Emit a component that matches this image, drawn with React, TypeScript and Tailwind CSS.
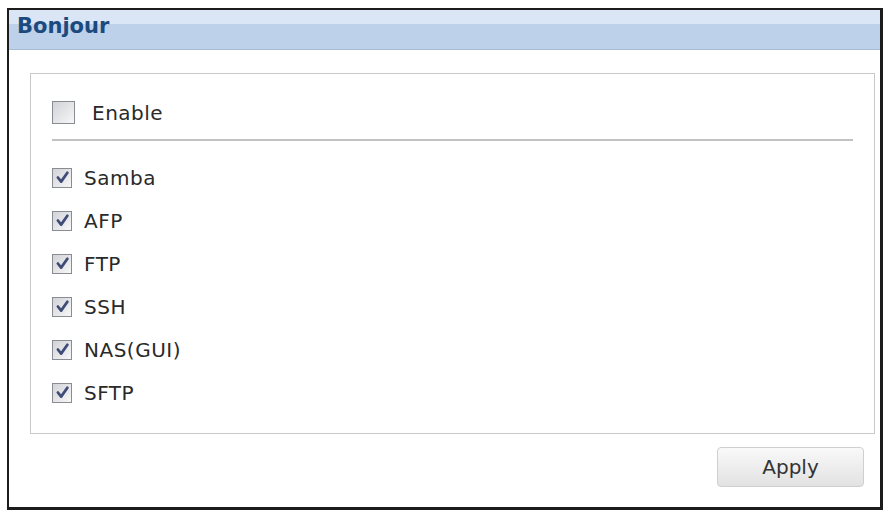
import React, { useState } from "react";

const services = ["Samba", "AFP", "FTP", "SSH", "NAS(GUI)", "SFTP"];

function Box({ checked, size }: { checked: boolean; size: number }) {
  return (
    <span
      className="flex shrink-0 items-center justify-center border border-[#8a8c94] bg-gradient-to-br from-[#d2d3d8] to-[#f7f7f7]"
      style={{ width: size, height: size }}
    >
      {checked && (
        <svg width={size - 5} height={size - 5} viewBox="0 0 12 12">
          <path d="M2.3 6 L4.9 9.3 L9.9 2.2" fill="none" stroke="#3f4c78" strokeWidth="2.2" strokeLinecap="round" strokeLinejoin="round" />
        </svg>
      )}
    </span>
  );
}

export default function App() {
  const [enabled, setEnabled] = useState(false);
  const [checked, setChecked] = useState<string[]>(services);

  return (
    <div className="w-[887px] h-[515px] bg-white pt-[8px] pl-[7px] font-['DejaVu_Sans',sans-serif]">
      <div className="flex h-[502px] w-[876px] flex-col border-[#1c1c1c] border-t-2 border-l-2 border-r-[3px] border-b-[3px] bg-white">
        <div className="h-[40px] border-b border-[#a9bcd6] bg-[linear-gradient(#dae6f6_0px,#dae6f6_14px,#bed1eb_14px,#bed1eb_100%)] pl-[8px]">
          <span className="block text-[21px] font-bold leading-[33px] text-[#1d4a7d]">Bonjour</span>
        </div>

        <div className="ml-[21px] mr-[5px] mt-[23px] h-[361px] border border-[#c9c9c9] px-[21px] pt-[27px]">
          <label className="flex h-[23px] cursor-pointer items-center" onClick={() => setEnabled(!enabled)}>
            <Box checked={enabled} size={23} />
            <span className="ml-[17px] text-[20px] tracking-[0.5px] text-[#2a2a2a]">Enable</span>
          </label>
          <div className="mt-[15px] h-[2px] bg-[#c2c2c2]" />
          <div className="mt-[15px] flex flex-col">
            {services.map((s) => (
              <label
                key={s}
                className="flex h-[43px] cursor-pointer items-center"
                onClick={() =>
                  setChecked(checked.includes(s) ? checked.filter((c) => c !== s) : [...checked, s])
                }
              >
                <Box checked={checked.includes(s)} size={20} />
                <span className="ml-[12px] text-[20px] tracking-[0.5px] text-[#2a2a2a]">{s}</span>
              </label>
            ))}
          </div>
        </div>

        <div className="mr-[16px] mt-[13px] flex justify-end">
          <button className="h-[40px] w-[147px] rounded-[4px] border border-[#cfcfcf] bg-gradient-to-b from-[#f9f9f9] to-[#e2e2e2] text-[20px] text-[#333]">
            Apply
          </button>
        </div>
      </div>
    </div>
  );
}
